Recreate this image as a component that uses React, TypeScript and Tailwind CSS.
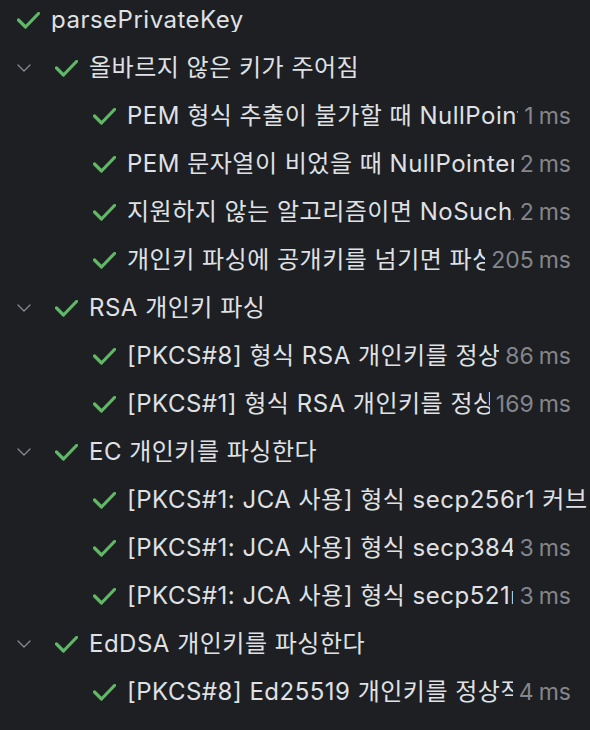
import React from 'react';

type Row = {
  level: number;
  label: string;
  time?: string;
  expandable?: boolean;
};

const rows: Row[] = [
  { level: 0, label: 'parsePrivateKey' },
  { level: 1, label: '올바르지 않은 키가 주어짐', expandable: true },
  { level: 2, label: 'PEM 형식 추출이 불가할 때 NullPointerException', time: '1' },
  { level: 2, label: 'PEM 문자열이 비었을 때 NullPointerException', time: '2' },
  { level: 2, label: '지원하지 않는 알고리즘이면 NoSuchAlgorithmException', time: '2' },
  { level: 2, label: '개인키 파싱에 공개키를 넘기면 파싱 실패', time: '205' },
  { level: 1, label: 'RSA 개인키 파싱', expandable: true },
  { level: 2, label: '[PKCS#8] 형식 RSA 개인키를 정상적으로 파싱한다', time: '86' },
  { level: 2, label: '[PKCS#1] 형식 RSA 개인키를 정상적으로 파싱한다', time: '169' },
  { level: 1, label: 'EC 개인키를 파싱한다', expandable: true },
  { level: 2, label: '[PKCS#1: JCA 사용] 형식 secp256r1 커브 개인키를 정상적으로 파싱한다' },
  { level: 2, label: '[PKCS#1: JCA 사용] 형식 secp384r1 커브 개인키를 정상적으로 파싱한다', time: '3' },
  { level: 2, label: '[PKCS#1: JCA 사용] 형식 secp521r1 커브 개인키를 정상적으로 파싱한다', time: '3' },
  { level: 1, label: 'EdDSA 개인키를 파싱한다', expandable: true },
  { level: 2, label: '[PKCS#8] Ed25519 개인키를 정상적으로 파싱한다', time: '4' },
];

const Check = () => (
  <svg width="23" height="17" viewBox="0 0 23 17" fill="none" className="shrink-0" aria-hidden="true">
    <polyline points="1.5,8 8.5,15 21.5,1.5" stroke="#5fb865" strokeWidth={3.2} strokeLinecap="round" strokeLinejoin="round" />
  </svg>
);

const Chevron = () => (
  <svg width="14" height="8" viewBox="0 0 14 8" fill="none" aria-hidden="true">
    <polyline points="1,1 7,7 13,1" stroke="#868a91" strokeWidth={1.3} strokeLinecap="round" strokeLinejoin="round" />
  </svg>
);

export default function App() {
  return (
    <div
      className="w-[590px] h-[730px] bg-[#1e1f22] overflow-hidden text-[#dfe1e5]"
      style={{ fontFamily: 'Inter, "Noto Sans CJK KR", sans-serif' }}
    >
      <div className="-mt-[4px]">
        {rows.map((r, i) => (
          <div
            key={i}
            className={`h-[48px] flex items-center pl-[17px] ${r.time ? 'pr-[19px]' : ''}`}
          >
            {r.level > 0 && (
              <div className="flex items-center shrink-0" style={{ width: r.level * 38 }}>
                {r.expandable && <Chevron />}
              </div>
            )}
            <Check />
            <div className="ml-[11px] flex-1 min-w-0 overflow-hidden whitespace-nowrap text-[24px] tracking-[0.5px] leading-none">
              {r.label}
            </div>
            {r.time && (
              <div className="shrink-0 ml-[6px] text-[23px] leading-none text-[#83868c] whitespace-nowrap">
                {r.time}
                <span className="ml-[5px]">ms</span>
              </div>
            )}
          </div>
        ))}
      </div>
    </div>
  );
}
